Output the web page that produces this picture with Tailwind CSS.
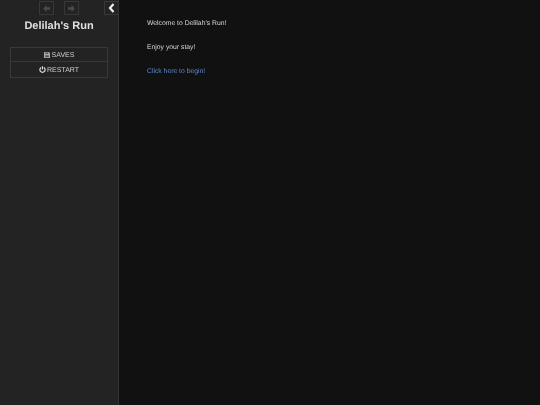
<!DOCTYPE html>
<html><head><meta charset="utf-8">
<script src="https://cdn.jsdelivr.net/npm/@tailwindcss/browser@4"></script>
</head>
<body class="w-[540px] h-[405px] overflow-hidden bg-[#111111] font-['Liberation_Sans',sans-serif] [text-rendering:geometricPrecision]">
<div class="flex h-[405px]">
  <aside class="relative w-[119px] shrink-0 h-full bg-[#232323] border-r border-[#333333] flex flex-col items-center [will-change:transform]">
    <div class="flex gap-[10px] h-[15px] pt-[1px]">
      <div class="w-[15px] h-[14px] border border-[#383838] flex items-center justify-center">
        <svg class="w-[9px] h-[9px]" viewBox="0 0 10 10"><path d="M5 1 1.2 5 5 9V6.5h4v-3H5z" fill="#4a4a4a"/></svg>
      </div>
      <div class="w-[15px] h-[14px] border border-[#383838] flex items-center justify-center">
        <svg class="w-[9px] h-[9px]" viewBox="0 0 10 10"><path d="M5 1 8.8 5 5 9V6.5H1v-3h4z" fill="#4a4a4a"/></svg>
      </div>
    </div>
    <div class="absolute top-[1px] right-0 w-[14px] h-[14px] bg-[#232323] border border-[#383838] border-r-0 flex items-center justify-center">
      <svg class="w-[8px] h-[10px]" viewBox="0 0 8 10"><path d="M5.5 1 2 5l3.5 4" fill="none" stroke="#eeeeee" stroke-width="2.2"/></svg>
    </div>
    <h1 class="mt-[3px] pt-[1px] text-[11px] leading-[14px] font-bold text-[#e0e0e0]">Delilah's Run</h1>
    <nav class="mt-[14px] w-[98px] border border-[#383838] text-[7px] leading-[14px] text-[#d0d0d0]">
      <div class="h-[14px] pt-[1px] flex items-center justify-center gap-[2px] border-b border-[#383838]">
        <svg class="w-[6px] h-[6px]" viewBox="0 0 6 6"><path d="M0 0h4.8L6 1.2V6H0z" fill="#aaaaaa"/><path d="M1.3.6h2.8v1.5H1.3zM1.2 3.3h3.6v2H1.2z" fill="#555555"/></svg>
        <span class="mt-[2px]">SAVES</span>
      </div>
      <div class="h-[15px] flex items-center justify-center gap-[1px]">
        <svg class="w-[7px] h-[7px]" viewBox="0 0 8 8"><path d="M2.4 1.7a3 3 0 1 0 3.2 0" fill="none" stroke="#dddddd" stroke-width="1.4"/><path d="M4 .3v3.6" stroke="#dddddd" stroke-width="1.4"/></svg>
        <span class="mt-[2px]">RESTART</span>
      </div>
    </nav>
  </aside>
  <main class="pl-[28px] pt-[19px] text-[6.8px] leading-[9px] text-[#d8d8d8] [will-change:transform]">
    <p>Welcome to Delilah's Run!</p>
    <p class="mt-[15px]">Enjoy your stay!</p>
    <p class="mt-[15px] text-[#5f88c8]">Click here to begin!</p>
  </main>
</div>
</body></html>
